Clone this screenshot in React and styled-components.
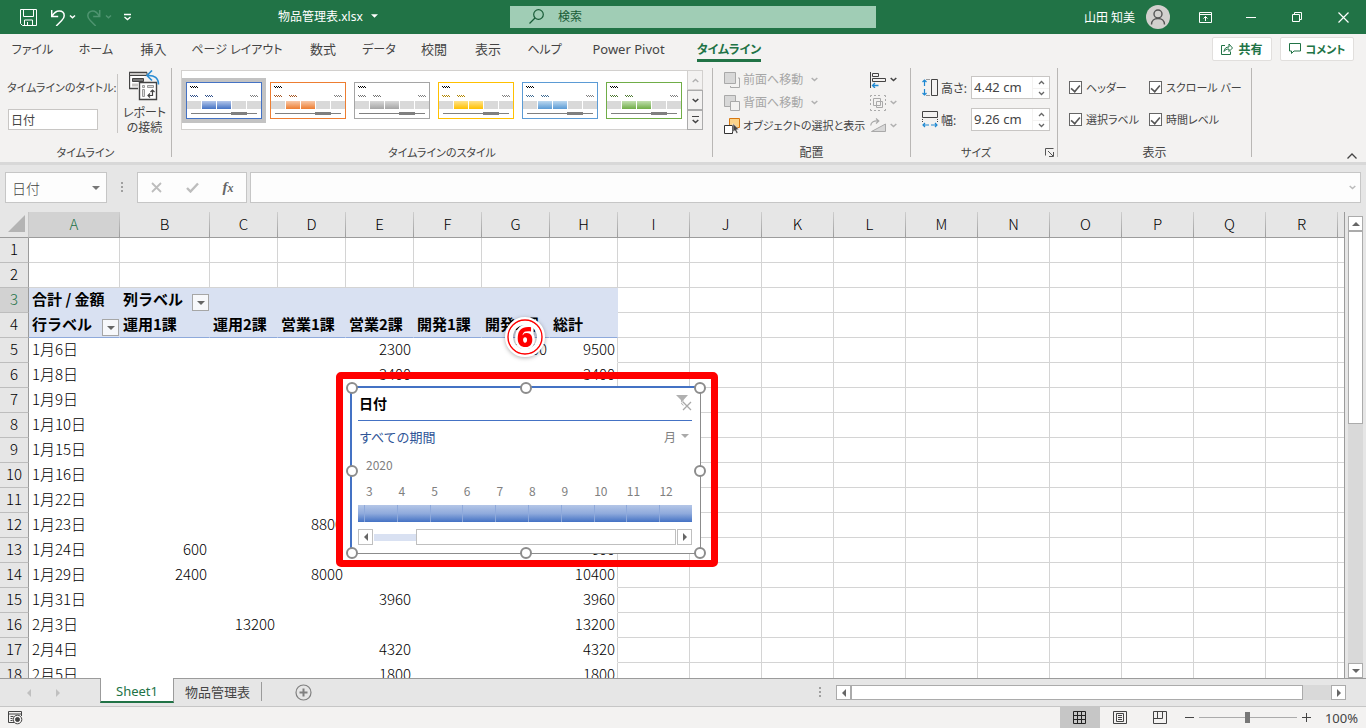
import styled, { createGlobalStyle } from "styled-components";

const columns = [
  { name: "A", width: 91, active: true },
  { name: "B", width: 90 },
  ...["C", "D", "E", "F", "G", "H"].map((name) => ({ name, width: 68 })),
  ...["I", "J", "K", "L", "M", "N", "O", "P", "Q", "R"].map((name) => ({
    name,
    width: 72,
  })),
];

const rows = [
  {},
  {},
  { A: "合計 / 金額", B: "列ラベル" },
  {
    A: "行ラベル",
    B: "運用1課",
    C: "運用2課",
    D: "営業1課",
    E: "営業2課",
    F: "開発1課",
    G: "開発2課",
    H: "総計",
  },
  { A: "1月6日", E: 2300, G: 7200, H: 9500 },
  { A: "1月8日", E: 3400, H: 3400 },
  { A: "1月9日" },
  { A: "1月10日" },
  { A: "1月15日" },
  { A: "1月16日" },
  { A: "1月22日" },
  { A: "1月23日", D: 8800 },
  { A: "1月24日", B: 600, H: 600 },
  { A: "1月29日", B: 2400, D: 8000, H: 10400 },
  { A: "1月31日", E: 3960, H: 3960 },
  { A: "2月3日", C: 13200, H: 13200 },
  { A: "2月4日", E: 4320, H: 4320 },
  { A: "2月5日", E: 1800, H: 1800 },
];

const tabs = [
  { name: "ファイル", width: 65, kana: true },
  { name: "ホーム", width: 62, kana: true },
  { name: "挿入", width: 53 },
  { name: "ページ レイアウト", width: 114, kana: true },
  { name: "数式", width: 58 },
  { name: "データ", width: 54, kana: true },
  { name: "校閲", width: 56 },
  { name: "表示", width: 52 },
  { name: "ヘルプ", width: 61, kana: true },
  { name: "Power Pivot", width: 107 },
  { name: "タイムライン", width: 94, kana: true, active: true },
];

const styles = [
  { color: "#4472c4", light: "#b4c6ea" },
  { color: "#ed7d31", light: "#f8c8a8" },
  { color: "#a5a5a5", light: "#d8d8d8" },
  { color: "#ffc000", light: "#ffe38c" },
  { color: "#5b9bd5", light: "#bcd8ef" },
  { color: "#70ad47", light: "#c2dfb0" },
];

const months = [3, 4, 5, 6, 7, 8, 9, 10, 11, 12];

const handles = [
  [0, 0],
  [50, 0],
  [100, 0],
  [0, 50],
  [100, 50],
  [0, 100],
  [50, 100],
  [100, 100],
];

function Chevron({ color = "#444" }) {
  return (
    <svg width="7" height="5" viewBox="0 0 7 5" fill="none" stroke={color}>
      <path d="M.7 1l2.8 2.6L6.3 1" strokeWidth="1.5" />
    </svg>
  );
}

function Triangle({ dir = "down", color = "#666" }) {
  const turn = { down: 0, left: 90, up: 180, right: 270 }[dir];
  return (
    <svg width="8" height="8" viewBox="0 0 8 8">
      <path
        d="M0 2h8L4 6z"
        fill={color}
        transform={`rotate(${turn} 4 4)`}
      />
    </svg>
  );
}

function StyleThumb({ color, light }) {
  const id = `grad${color.slice(1)}`;
  const wave = (x, y) => `M${x} ${y + 0.5}h8M${x + 1} ${y + 1.5}h7`;
  return (
    <svg width="76" height="37" viewBox="0 0 76 37" fill="none">
      <defs>
        <linearGradient id={id} x1="0" y1="0" x2="0" y2="1">
          <stop offset="0" stopColor={light} />
          <stop offset="1" stopColor={color} />
        </linearGradient>
      </defs>
      <rect x=".5" y=".5" width="75" height="36" fill="#fff" stroke={color} />
      <g strokeDasharray="1 1">
        <path d={wave(4, 4)} stroke="#000" />
        <path d={wave(4, 13) + wave(19, 13)} stroke={color} />
        <path d={wave(4, 13) + wave(19, 13)} stroke="#000" opacity=".3" />
        <path d={wave(64, 13)} stroke="#808080" />
      </g>
      <path d="M1 19h14v8H1zM46 19h14v8H46zM61 19h14v8H61z" fill="#d9d9d9" />
      <path d="M16 19h14v8H16zM31 19h14v8H31z" fill={`url(#${id})`} />
      <path d="M5 31.5h66" stroke="#7f7f7f" />
      <path d="M45 30h16v3H45z" fill="#7f7f7f" />
    </svg>
  );
}

function TitleBar() {
  return (
    <Title>
      <Quick>
        <IconButton aria-label="上書き保存" $w={37}>
          <svg width="17" height="17" viewBox="0 0 17 17" fill="none" stroke="#fff">
            <path d="M.5.5h16v16h-14l-2-2zM3.5.5v7h10v-7M4.5 16v-5h8v5M7.5 16v-3" />
          </svg>
        </IconButton>
        <IconButton aria-label="元に戻す" $w={28}>
          <svg width="26" height="17" viewBox="0 0 26 17" fill="none" stroke="#fff">
            <path d="M.7 1v6.500h6.500M1.200 7C3.200 3.500 5.700 2 8.200 2c3 0 5 2 5 4.800 0 2-1 3.300-2.500 4.700L5.200 17" strokeWidth="1.500" />
            <path d="M19 6.500l2.500 2.300L24 6.500" strokeWidth="1.500" />
          </svg>
        </IconButton>
        <IconButton aria-label="やり直し" $w={28}>
          <svg width="26" height="17" viewBox="0 0 26 17" fill="none" stroke="#4f9470">
            <path d="M12.700 1v6.500H6.200M12.200 7C10.200 3.500 7.700 2 5.700 2 2.700 2 .8 4 .8 6.800c0 2 1 3.300 2.500 4.700L8.700 17" strokeWidth="1.500" />
            <path d="M19 6.500l2.500 2.300L24 6.500" strokeWidth="1.500" />
          </svg>
        </IconButton>
        <IconButton aria-label="カスタマイズ" $w={12}>
          <svg width="9" height="8" viewBox="0 0 9 8" fill="none" stroke="#fff">
            <path d="M1 1.500h7M1.500 4l3 2.500L7.500 4" strokeWidth="1.400" />
          </svg>
        </IconButton>
      </Quick>
      <FileName>
        物品管理表.xlsx
        <Triangle color="#fff" />
      </FileName>
      <Search>
        <svg width="15" height="15" viewBox="0 0 15 15" fill="none" stroke="#185c37">
          <circle cx="9.500" cy="5.500" r="4.800" strokeWidth="1.200" />
          <path d="M6 9L.5 14.500" strokeWidth="1.300" />
        </svg>
        <input type="text" placeholder="検索" aria-label="検索" />
      </Search>
      <Account>
        山田 知美
        <svg width="24" height="24" viewBox="0 0 24 24" fill="none" stroke="#555">
          <circle cx="12" cy="12" r="12" fill="#d2d0ce" stroke="none" />
          <circle cx="12" cy="9" r="4" strokeWidth="1.400" />
          <path d="M5.500 19.500c0-3.800 2.800-6 6.500-6s6.500 2.200 6.500 6" strokeWidth="1.400" />
        </svg>
      </Account>
      <WindowButtons>
        <IconButton aria-label="リボンの表示オプション" $w={46}>
          <svg width="13" height="11" viewBox="0 0 13 11" fill="none" stroke="#fff">
            <path d="M.5.500h12v10H.5zM.500 2.500h12M6.500 9V4.500M4.500 6.500l2-2 2 2" />
          </svg>
        </IconButton>
        <IconButton aria-label="最小化" $w={46}>
          <svg width="10" height="1"><path d="M0 .5h10" stroke="#fff" /></svg>
        </IconButton>
        <IconButton aria-label="元に戻す (縮小)" $w={46}>
          <svg width="10" height="10" viewBox="0 0 10 10" fill="none" stroke="#fff">
            <path d="M.5 2.500h7v7h-7zM2.500 2.500v-2h7v7h-2" />
          </svg>
        </IconButton>
        <IconButton aria-label="閉じる" $w={46}>
          <svg width="11" height="11" viewBox="0 0 11 11" stroke="#fff">
            <path d="M.5.500l10 10M10.500.500l-10 10" strokeWidth="1.200" />
          </svg>
        </IconButton>
      </WindowButtons>
    </Title>
  );
}

function RibbonTabs() {
  return (
    <TabBar>
      {tabs.map((tab) => (
        <Tab key={tab.name} $w={tab.width} $kana={tab.kana} $active={tab.active}>
          <span>{tab.name}</span>
        </Tab>
      ))}
      <TabActions>
        <ActionButton $w={60}>
          <svg width="12" height="12" viewBox="0 0 12 12" fill="none" stroke="#217346">
            <path d="M4 2.500H.5v9h9V8.500M3 8.500c.300-3 2-4.500 5-4.500V1l3.500 4L8 8.500V6C5.500 6 4 6.800 3 8.500z" />
          </svg>
          共有
        </ActionButton>
        <ActionButton $w={74} $kana>
          <svg width="12" height="12" viewBox="0 0 12 12" fill="none" stroke="#217346">
            <path d="M.5.500h11v7.500H5L2.500 10.500V8h-2z" />
          </svg>
          コメント
        </ActionButton>
      </TabActions>
    </TabBar>
  );
}

function Ribbon() {
  return (
    <RibbonBar>
      <Group $w={172}>
        <GroupBody>
          <TitleField>
            <label htmlFor="caption">タイムラインのタイトル:</label>
            <input id="caption" type="text" defaultValue="日付" />
          </TitleField>
          <ReportButton>
            <svg width="31" height="31" viewBox="0 0 31 31" fill="none" stroke="#444">
              <path d="M18 2.500H.500v16H9" fill="#fff" strokeWidth="1.300" />
              <path d="M.500 2.500H18v3H.500z" fill="#c8c6c4" />
              <path d="M3.500 8.500h11v3h-11z" fill="#777" />
              <path d="M3 13.500h6v3H3z" fill="#c8c6c4" stroke="none" />
              <path d="M10.500 12.500h17v17h-17z" fill="#fff" strokeWidth="1.400" />
              <path d="M13.500 15.500h2v2h-2zM13.500 19.500h2v7h-2zM18.500 15.500h6v2h-6z" stroke="#999" fill="#ddd" />
              <path d="M19 25.500h4.500V20M21 23.500l-2 2 2 2M21.500 22l2-2 2 2" strokeWidth="1.200" />
              <path d="M23 .5l-5 5 5 5M18.500 5.500c7-.5 11 2.500 11 9" stroke="#2a8dd4" strokeWidth="1.600" />
            </svg>
            <span>レポート</span>
            <span>の接続</span>
          </ReportButton>
        </GroupBody>
        <GroupLabel $kana>タイムライン</GroupLabel>
      </Group>

      <Group $w={541}>
        <Gallery>
          {styles.map((style, i) => (
            <StyleButton key={style.color} $selected={i === 0} aria-label={`スタイル ${i + 1}`}>
              <StyleThumb {...style} />
            </StyleButton>
          ))}
          <GalleryScroll>
            <button aria-label="前の行" disabled>
              <svg width="7" height="5" fill="none" stroke="#b0b0b0">
                <path d="M.7 4l2.800-2.600L6.300 4" strokeWidth="1.300" />
              </svg>
            </button>
            <button aria-label="次の行">
              <Chevron />
            </button>
            <button aria-label="その他">
              <svg width="7" height="8" fill="none" stroke="#444">
                <path d="M0 .5h7" />
                <path d="M.7 4l2.800 2.600L6.300 4" strokeWidth="1.500" />
              </svg>
            </button>
          </GalleryScroll>
        </Gallery>
        <GroupLabel $kana>タイムラインのスタイル</GroupLabel>
      </Group>

      <Group $w={198}>
        <ArrangeBody>
          <ArrangeList>
            <ToolButton disabled>
              <svg width="16" height="16" viewBox="0 0 16 16" fill="none" stroke="#a9a9a9">
                <path d="M.5.500h11v11H.500z" fill="#d8d8d8" />
                <path d="M14 6h1.500v9.500H6.500V14" />
              </svg>
              <ToolText $w={65}>前面へ移動</ToolText>
              <Chevron color="#b0b0b0" />
            </ToolButton>
            <ToolButton disabled>
              <svg width="16" height="16" viewBox="0 0 16 16" stroke="#a9a9a9">
                <path d="M.5.500h11v11H.500z" fill="#d8d8d8" />
                <path d="M6.500 6.500h9v9h-9z" fill="#f3f2f1" />
              </svg>
              <ToolText $w={65}>背面へ移動</ToolText>
              <Chevron color="#b0b0b0" />
            </ToolButton>
            <ToolButton>
              <svg width="16" height="16" viewBox="0 0 16 16">
                <path d="M5.500.500h10v9h-10z" fill="#fbd48b" stroke="#d8770f" />
                <path d="M.5 7.500h8v8h-8z" fill="#fff" stroke="#333" />
                <path d="M9 5.500l6 6-2.500.300 1.500 3-1.500.700-1.500-3-2 1.500z" fill="#444" stroke="#fff" strokeWidth=".5" />
              </svg>
              <ToolText $kana>オブジェクトの選択と表示</ToolText>
            </ToolButton>
          </ArrangeList>
          <ArrangeIcons>
            <ToolButton aria-label="配置">
              <svg width="16" height="16" viewBox="0 0 16 16" fill="none" stroke="#444">
                <path d="M.5 0v16M2.500 1.500h6v3h-6zM2.500 6.500h13v3h-13z" />
                <path d="M8.500 13.500h-6M5 11l-2.500 2.500L5 16" stroke="#1e88d2" strokeWidth="1.300" />
              </svg>
              <Chevron />
            </ToolButton>
            <ToolButton aria-label="グループ化" disabled>
              <svg width="16" height="16" viewBox="0 0 16 16" fill="none" stroke="#a9a9a9">
                <path d="M.5 2V.500H2M14 .500h1.500V2M15.500 14v1.500H14M2 15.500H.500V14" />
                <path d="M4 .500h8M4 15.500h8M.500 4v8M15.500 4v8" strokeDasharray="2 2" />
                <path d="M3.500 3.500h7v7h-7zM6.500 6.500h6v6h-6z" />
              </svg>
              <Chevron color="#b0b0b0" />
            </ToolButton>
            <ToolButton aria-label="回転" disabled>
              <svg width="16" height="16" viewBox="0 0 16 16" fill="none" stroke="#a9a9a9">
                <path d="M15.500 6v7.500h-14z" fill="#d8d8d8" />
                <path d="M.7 7.500C1 4 4 2.500 8.500 3M6 .5L8.800 3 6 5.500" strokeWidth="1.200" />
              </svg>
              <Chevron color="#b0b0b0" />
            </ToolButton>
          </ArrangeIcons>
        </ArrangeBody>
        <GroupLabel>配置</GroupLabel>
      </Group>

      <Group $w={147}>
        <SizeBody>
          <SizeRow>
            <svg width="16" height="17" viewBox="0 0 16 17" fill="none">
              <path d="M9.500.500h6v16h-6z" stroke="#444" />
              <path d="M4.500.500h4M4.500 16.500h4" stroke="#444" strokeDasharray="1 1" />
              <path d="M2.500 1v6M.500 3l2-2 2 2M2.500 10v6M.500 14l2 2 2-2" stroke="#1e88d2" strokeWidth="1.200" />
            </svg>
            <label htmlFor="height">高さ:</label>
            <Spinner id="height" value="4.42 cm" />
          </SizeRow>
          <SizeRow>
            <svg width="16" height="17" viewBox="0 0 16 17" fill="none">
              <path d="M.5.500h15v6H.500z" stroke="#444" />
              <path d="M.500 8v4M15.500 8v4" stroke="#444" strokeDasharray="1 1" />
              <path d="M1 14h6M3 12l-2 2 2 2M9 14h6M13 12l2 2-2 2" stroke="#1e88d2" strokeWidth="1.200" />
            </svg>
            <label htmlFor="width">幅:</label>
            <Spinner id="width" value="9.26 cm" />
          </SizeRow>
        </SizeBody>
        <GroupLabel $kana>
          サイズ
          <button aria-label="サイズとプロパティ">
            <svg width="9" height="9" viewBox="0 0 9 9" fill="none" stroke="#555">
              <path d="M8.500.500h-8v7M3 3l5 5M8.500 4v4.500H4" />
            </svg>
          </button>
        </GroupLabel>
      </Group>

      <Group $w={194}>
        <CheckGrid>
          {["ヘッダー", "スクロール バー", "選択ラベル", "時間レベル"].map((text) => (
            <Check key={text}>
              <input type="checkbox" defaultChecked />
              {text}
            </Check>
          ))}
        </CheckGrid>
        <GroupLabel>表示</GroupLabel>
      </Group>
      <Collapse aria-label="リボンを折りたたむ">
        <svg width="10" height="6" fill="none" stroke="#444">
          <path d="M.5 5.500L5 1l4.500 4.500" strokeWidth="1.300" />
        </svg>
      </Collapse>
    </RibbonBar>
  );
}

function Spinner({ id, value }) {
  return (
    <SpinBox>
      <input id={id} type="text" defaultValue={value} />
      <div>
        <button aria-label="増やす">
          <svg width="7" height="5" fill="none" stroke="#666">
            <path d="M1 4l2.500-2.500L6 4" strokeWidth="1.300" />
          </svg>
        </button>
        <button aria-label="減らす">
          <svg width="7" height="5" fill="none" stroke="#666">
            <path d="M1 1l2.500 2.500L6 1" strokeWidth="1.300" />
          </svg>
        </button>
      </div>
    </SpinBox>
  );
}

function Dots() {
  return (
    <svg width="3" height="13" fill="#a0a0a0">
      <path d="M0 1h2v2H0zM0 5h2v2H0zM0 9h2v2H0z" />
    </svg>
  );
}

function FormulaBar() {
  return (
    <Formula>
      <NameBox>
        <input type="text" defaultValue="日付" aria-label="名前ボックス" />
        <button aria-label="名前の一覧">
          <Triangle color="#777" />
        </button>
      </NameBox>
      <Dots />
      <FormulaButtons>
        <button aria-label="キャンセル">
          <svg width="11" height="11" viewBox="0 0 11 11" stroke="#bdbdbd">
            <path d="M1 1l9 9M10 1l-9 9" strokeWidth="1.800" />
          </svg>
        </button>
        <button aria-label="入力">
          <svg width="13" height="11" viewBox="0 0 13 11" fill="none" stroke="#bdbdbd">
            <path d="M1 6l3.500 3.500L12 1.500" strokeWidth="2.400" />
          </svg>
        </button>
        <button aria-label="関数の挿入">
          <Fx>
            f<small>x</small>
          </Fx>
        </button>
      </FormulaButtons>
      <FormulaInput>
        <input type="text" aria-label="数式バー" />
        <Chevron color="#bbb" />
      </FormulaInput>
    </Formula>
  );
}

function Sheet() {
  return (
    <Table>
      <colgroup>
        <col width="29" />
        {columns.map((col) => (
          <col key={col.name} width={col.width} />
        ))}
        <col />
      </colgroup>
      <thead>
        <tr>
          <Corner>
            <svg width="17" height="17">
              <path d="M17 0v17H0z" fill="#b4b4b4" />
            </svg>
          </Corner>
          {columns.map((col) => (
            <ColumnHead key={col.name} $active={col.active}>
              {col.name}
            </ColumnHead>
          ))}
          <ColumnHead $last />
        </tr>
      </thead>
      <tbody>
        {rows.map((row, i) => (
          <tr key={i}>
            <RowHead $active={i === 2}>{i + 1}</RowHead>
            {columns.map((col, c) => (
              <Cell
                key={col.name}
                $kind={c > 7 || i < 2 ? "plain" : i < 4 ? "head" : "pivot"}
                $end={c === 7}
                $rule={i === 3}
                $numeric={typeof row[col.name] === "number"}
              >
                {(i === 2 && c === 1) || (i === 3 && c === 0) ? (
                  <FilterCell>
                    {row[col.name]}
                    <button aria-label="フィルター">
                      <Triangle />
                    </button>
                  </FilterCell>
                ) : (
                  row[col.name]
                )}
              </Cell>
            ))}
            <Cell $kind="plain" $last />
          </tr>
        ))}
      </tbody>
    </Table>
  );
}

function TimelineSlicer() {
  return (
    <Callout>
      <Slicer>
        <SlicerHead>
          日付
          <button aria-label="フィルターのクリア">
            <svg width="16" height="17" viewBox="0 0 16 17" fill="none">
              <path d="M0 1h12L7.500 6v6L5 9.500V6z" fill="#b0b0b0" />
              <path d="M6 7.500l9 8M15 7.500l-8 8" stroke="#fff" strokeWidth="3" />
              <path d="M6.500 7.500l8.500 8.500M15 8l-8 8" stroke="#a8a8a8" strokeWidth="1.300" />
            </svg>
          </button>
        </SlicerHead>
        <Period>
          すべての期間
          <Level>
            <select aria-label="時間レベル" defaultValue="月">
              <option>月</option>
            </select>
            <Triangle color="#aaa" />
          </Level>
        </Period>
        <Year>2020</Year>
        <Months>
          {months.map((month) => (
            <span key={month}>{month}</span>
          ))}
        </Months>
        <Bar>
          {months.map((month) => (
            <span key={month} />
          ))}
        </Bar>
        <SlicerScroll>
          <button aria-label="前へ">
            <Triangle dir="left" />
          </button>
          <SlicerTrack />
          <SlicerThumb />
          <button aria-label="次へ">
            <Triangle dir="right" />
          </button>
        </SlicerScroll>
        {handles.map(([x, y]) => (
          <Handle key={`${x}-${y}`} $x={x} $y={y} />
        ))}
      </Slicer>
    </Callout>
  );
}

function Badge() {
  return (
    <BadgeSvg width="48" height="48" viewBox="0 0 48 48">
      <circle cx="24" cy="24" r="17" fill="none" stroke="#fff" strokeWidth="6" />
      <circle cx="24" cy="24" r="17" fill="none" stroke="#f00" strokeWidth="1.400" />
      <circle cx="24" cy="24" r="14" fill="none" stroke="#fff" strokeWidth="4" />
      <text x="24" y="34" textAnchor="middle">
        6
      </text>
    </BadgeSvg>
  );
}

function BottomBar() {
  return (
    <>
      <SheetTabs>
        <SheetNav>
          <button aria-label="前のシート">
            <Triangle dir="left" color="#c0c0c0" />
          </button>
          <button aria-label="次のシート">
            <Triangle dir="right" color="#c0c0c0" />
          </button>
        </SheetNav>
        <SheetTab $active>Sheet1</SheetTab>
        <SheetTab>物品管理表</SheetTab>
        <AddSheet aria-label="新しいシート">
          <svg width="17" height="17" viewBox="0 0 17 17" fill="none" stroke="#808080">
            <circle cx="8.500" cy="8.500" r="7.500" strokeWidth="1.200" />
            <path d="M8.500 4.500v8M4.500 8.500h8" strokeWidth="2" />
          </svg>
        </AddSheet>
        <Dots />
        <HScroll>
          <ScrollButton aria-label="左へ">
            <Triangle dir="left" />
          </ScrollButton>
          <HThumb />
          <ScrollButton aria-label="右へ">
            <Triangle dir="right" />
          </ScrollButton>
        </HScroll>
      </SheetTabs>
      <StatusBar>
        <MacroButton aria-label="マクロの記録">
          <svg width="15" height="14" viewBox="0 0 15 14" fill="none" stroke="#444">
            <path d="M6 11.500H.500V.500h13V5M.500 3h13M2.500 5.500h3M2.500 7.500h2M2.500 9.500h2" />
            <circle cx="9.500" cy="8.500" r="4.300" fill="#f3f2f1" />
            <circle cx="9.500" cy="8.500" r="2" fill="#444" />
          </svg>
        </MacroButton>
        <ViewButton aria-label="標準" $active>
          <svg width="13" height="13" fill="none" stroke="#222">
            <path d="M.5.500h12v12H.500zM4.500 0v13M8.500 0v13M0 4.500h13M0 8.500h13" />
          </svg>
        </ViewButton>
        <ViewButton aria-label="ページ レイアウト">
          <svg width="14" height="13" fill="none" stroke="#444">
            <path d="M.5.500h13v12H.500zM3.500 2.500h7v8h-7zM5 4.500h4M5 6.500h4M5 8.500h4" />
          </svg>
        </ViewButton>
        <ViewButton aria-label="改ページ プレビュー">
          <svg width="14" height="13" fill="none" stroke="#444">
            <path d="M.5.500h13v12H.500zM4.500 .500v7M9.500.500v7M.500 7.500h9" />
          </svg>
        </ViewButton>
        <Zoom>
          <button aria-label="縮小">
            <svg width="9" height="9" stroke="#444"><path d="M0 4.500h9" /></svg>
          </button>
          <input type="range" min="0" max="200" defaultValue="100" aria-label="ズーム" />
          <button aria-label="拡大">
            <svg width="9" height="9" stroke="#444"><path d="M0 4.500h9M4.500 0v9" /></svg>
          </button>
          <span>100%</span>
        </Zoom>
      </StatusBar>
    </>
  );
}

export default function App() {
  return (
    <Window>
      <Global />
      <TitleBar />
      <RibbonTabs />
      <Ribbon />
      <FormulaBar />
      <Workspace>
        <GridArea>
          <Sheet />
          <TimelineSlicer />
          <Badge />
        </GridArea>
        <VScroll>
          <ScrollButton aria-label="上へ">
            <Triangle dir="up" />
          </ScrollButton>
          <VThumb />
          <ScrollButton aria-label="下へ">
            <Triangle />
          </ScrollButton>
        </VScroll>
      </Workspace>
      <BottomBar />
    </Window>
  );
}

const Global = createGlobalStyle`
  * {
    box-sizing: border-box;
  }
  body {
    margin: 0;
    overflow: hidden;
  }
  button, input, select {
    font: inherit;
    color: inherit;
    font-feature-settings: inherit;
    margin: 0;
    padding: 0;
    border: 0;
    border-radius: 0;
    outline: 0;
    background: none;
    appearance: none;
    min-width: 0;
  }
  svg {
    display: block;
    flex: none;
  }
`;

const Window = styled.div`
  display: flex;
  flex-direction: column;
  height: 100vh;
  background-color: #e6e6e6;
  color: #444444;
  font-family: "Noto Sans", "Noto Sans CJK JP", sans-serif;
  font-size: 12px;
  font-feature-settings: "palt";
  white-space: nowrap;
`;

const Title = styled.header`
  display: flex;
  align-items: center;
  flex: none;
  height: 34px;
  background-color: #217346;
  color: #ffffff;
`;

const Quick = styled.div`
  display: flex;
  gap: 8px;
  width: 278px;
  padding-left: 10px;

  button:nth-child(n + 2) {
    justify-content: flex-start;
    margin-left: -4px;
    margin-right: 4px;
  }
`;

const IconButton = styled.button`
  display: flex;
  align-items: center;
  justify-content: center;
  width: ${(props) => props.$w}px;
  height: 34px;
`;

const FileName = styled.div`
  display: flex;
  align-items: center;
  gap: 8px;
  width: 232px;
  padding-bottom: 2px;

  svg {
    width: 7px;
  }
`;

const Search = styled.div`
  display: flex;
  align-items: center;
  gap: 14px;
  width: 366px;
  height: 22px;
  padding: 0 0 1px 19px;
  background-color: #a0cdb5;
  color: #185c37;

  input {
    flex: 1;
  }
  input::placeholder {
    color: #185c37;
    opacity: 1;
  }
`;

const Account = styled.div`
  display: flex;
  flex: 1;
  align-items: center;
  justify-content: flex-end;
  gap: 11px;
`;

const WindowButtons = styled.div`
  display: flex;
  margin-left: 12px;
`;

const TabBar = styled.nav`
  display: flex;
  flex: none;
  height: 34px;
  background-color: #f3f2f1;
`;

const Tab = styled.button`
  display: flex;
  justify-content: center;
  width: ${(props) => props.$w}px;
  font-size: ${(props) => (props.$kana ? "12px" : "13px")};
  font-weight: ${(props) => (props.$active ? "bold" : "normal")};
  color: ${(props) => (props.$active ? "#217346" : "#444444")};

  span {
    height: 28px;
    line-height: ${(props) => (props.$kana ? "32px" : "30px")};
    border-bottom: 3px solid
      ${(props) => (props.$active ? "#217346" : "transparent")};
  }
`;

const TabActions = styled.div`
  display: flex;
  flex: 1;
  justify-content: flex-end;
  gap: 8px;
  padding: 3px 12px 0 0;
`;

const ActionButton = styled.button`
  display: flex;
  align-items: center;
  justify-content: center;
  gap: 5px;
  width: ${(props) => props.$w}px;
  height: 24px;
  background-color: #ffffff;
  border: 1px solid #e1dfdd;
  border-radius: 2px;
  color: #217346;
  font-size: ${(props) => (props.$kana ? "11px" : "12px")};
  font-weight: bold;
`;

const RibbonBar = styled.section`
  display: flex;
  flex: none;
  height: 97px;
  background-color: #f3f2f1;
  border-bottom: 3px solid #d8d8d8;
`;

const Group = styled.div`
  display: flex;
  flex-direction: column;
  flex: none;
  width: ${(props) => props.$w}px;
  height: 89px;
  border-right: 1px solid #b9b7b5;
`;

const GroupBody = styled.div`
  display: flex;
  flex: 1;
`;

const GroupLabel = styled.div`
  display: flex;
  align-items: center;
  justify-content: center;
  height: 20px;
  padding-top: 10px;
  font-size: ${(props) => (props.$kana ? "11px" : "12px")};

  button {
    margin: 0 -50px 0 51px;
    padding: 3px;
  }
`;

const TitleField = styled.div`
  display: flex;
  flex-direction: column;
  width: 118px;
  margin: 6px 0 4px;
  padding: 4px 0 0 7px;
  border-right: 1px solid #c8c6c4;

  label {
    height: 31px;
    font-size: 11px;
    line-height: 20px;
  }
  input {
    width: 90px;
    height: 21px;
    margin-left: 1px;
    padding-left: 2px;
    background-color: #ffffff;
    border: 1px solid #c8c6c4;
  }
`;

const ReportButton = styled.button`
  display: flex;
  flex: 1;
  flex-direction: column;
  align-items: center;
  padding-top: 2px;
  line-height: 15px;

  svg {
    margin-bottom: 4px;
  }
`;

const Gallery = styled.div`
  display: flex;
  align-items: center;
  align-self: center;
  height: 60px;
  margin: 2px 0 7px;
  background-color: #ffffff;
  border: 1px solid #d2d0ce;
  border-right: 0;
`;

const StyleButton = styled.button`
  padding: 4px;
  background-color: ${(props) => (props.$selected ? "#c3c3c3" : "transparent")};
`;

const GalleryScroll = styled.div`
  display: grid;
  grid-template-rows: 20px 20px 20px;
  align-self: flex-start;
  width: 16px;
  margin: -1px 0 -1px 1px;

  button {
    display: grid;
    place-items: center;
    background-color: #f3f2f1;
    border: 1px solid #ababab;
  }
  button:disabled {
    border-color: #d2d0ce;
  }
`;

const ArrangeBody = styled.div`
  display: flex;
  flex: 1;
  gap: 10px;
  padding-left: 11px;
`;

const ArrangeList = styled.div`
  display: flex;
  flex-direction: column;
  width: 136px;
`;

const ArrangeIcons = styled.div`
  display: flex;
  flex-direction: column;

  button {
    gap: 4px;
  }
`;

const ToolButton = styled.button`
  display: flex;
  align-items: center;
  gap: 3px;
  height: 23px;
  line-height: 18px;

  &:disabled {
    color: #a6a6a6;
  }
`;

const ToolText = styled.span`
  width: ${(props) => (props.$w ? `${props.$w}px` : "auto")};
  font-size: ${(props) => (props.$kana ? "11px" : "12px")};
  text-align: left;
`;

const SizeBody = styled.div`
  display: flex;
  flex: 1;
  flex-direction: column;
  gap: 9px;
  padding: 8px 7px 0 11px;
`;

const SizeRow = styled.div`
  display: flex;
  align-items: center;
  height: 23px;
  gap: 3px;

  label {
    flex: 1;
  }
`;

const SpinBox = styled.div`
  display: flex;
  width: 79px;
  height: 23px;
  background-color: #ffffff;
  border: 1px solid #c8c6c4;

  input {
    flex: 1;
    padding: 0 0 2px 2px;
    font-size: 13px;
  }
  div {
    display: grid;
    grid-template-rows: 1fr 1fr;
    width: 17px;
    border-left: 1px solid #f3f2f1;
  }
  button {
    display: grid;
    place-items: center;
  }
  button + button {
    border-top: 1px solid #f3f2f1;
  }
`;

const CheckGrid = styled.div`
  display: grid;
  grid-template-columns: 80px 1fr;
  grid-template-rows: 32px 32px;
  flex: 1;
  padding: 3px 0 0 11px;
`;

const Check = styled.label`
  display: flex;
  align-items: center;
  gap: 4px;
  font-size: 11px;

  input {
    display: flex;
    justify-content: center;
    width: 13px;
    height: 13px;
    background-color: #ffffff;
    border: 1px solid #666666;
  }
  input:checked::after {
    content: "";
    width: 5px;
    height: 9px;
    border: solid #555555;
    border-width: 0 2px 2px 0;
    transform: rotate(40deg) scale(0.8);
  }
`;

const Collapse = styled.button`
  margin-left: auto;
  align-self: flex-end;
  padding: 4px 9px 3px;
`;

const Formula = styled.div`
  display: flex;
  flex: none;
  align-items: center;
  height: 47px;
  padding: 7px 5px 9px;

  > svg {
    margin: 0 13px 0 14px;
  }
`;

const NameBox = styled.div`
  display: flex;
  align-items: center;
  width: 102px;
  height: 31px;
  padding: 0 6px;
  background-color: #fdfdfd;
  border: 1px solid #c6c6c6;
  font-size: 14px;
  font-weight: 300;

  input {
    flex: 1;
  }
`;

const FormulaButtons = styled.div`
  display: flex;
  width: 110px;
  height: 31px;
  margin-right: 3px;
  background-color: #fdfdfd;
  border: 1px solid #c6c6c6;

  button {
    display: grid;
    flex: 1;
    place-items: center;
  }
`;

const Fx = styled.span`
  color: #666666;
  font-family: "Liberation Serif", serif;
  font-size: 15px;
  font-style: italic;
  font-weight: bold;

  small {
    font-size: 12px;
  }
`;

const FormulaInput = styled.div`
  display: flex;
  flex: 1;
  align-items: center;
  height: 31px;
  padding-right: 4px;
  background-color: #fdfdfd;
  border: 1px solid #c6c6c6;

  input {
    flex: 1;
  }
`;

const Workspace = styled.main`
  display: flex;
  flex: 1;
  min-height: 0;
`;

const GridArea = styled.div`
  position: relative;
  flex: 1;
  overflow: hidden;
  border-right: 1px solid #9b9b9b;
`;

const Table = styled.table`
  width: 100%;
  table-layout: fixed;
  border-collapse: separate;
  border-spacing: 0;
  color: #000000;
  font-family: "Noto Sans CJK JP", sans-serif;
  font-size: 15px;
  font-feature-settings: normal;
  line-height: 22px;

  th,
  td {
    padding: 0 0 2px;
    overflow: hidden;
    font-weight: 300;
  }
`;

const Corner = styled.th`
  height: 26px;
  border-right: 1px solid #c6c6c6;
  border-bottom: 1px solid #9b9b9b;

  svg {
    margin-left: 8px;
  }
`;

const ColumnHead = styled.th`
  background-color: ${(props) => (props.$active ? "#d2d2d2" : "#e6e6e6")};
  border-right: ${(props) => (props.$last ? 0 : "1px solid")};
  border-image: linear-gradient(#d0d0d0, #9b9b9b) 1;
  border-bottom: 1px solid #9b9b9b;
  color: ${(props) => (props.$active ? "#217346" : "#000000")};
`;

const RowHead = styled.th`
  height: 25px;
  background-color: ${(props) => (props.$active ? "#d2d2d2" : "#e6e6e6")};
  border-right: 1px solid #9b9b9b;
  border-bottom: 1px solid #bdbdbd;
  color: ${(props) => (props.$active ? "#217346" : "#000000")};
`;

const lineColor = {
  plain: "#d4d4d4",
  head: "#d9e1f2",
  pivot: "#ffffff",
};

const Cell = styled.td`
  height: 25px;
  && {
    padding: 0 2px 2px 3px;
    font-weight: ${(props) => (props.$kind === "head" ? "bold" : "300")};
  }
  background-color: ${(props) =>
    props.$kind === "head" ? "#d9e1f2" : "#ffffff"};
  border-right: ${(props) => (props.$last ? 0 : "1px solid")};
  border-right-color: ${(props) =>
    props.$end && props.$kind === "pivot" ? "#d4d4d4" : lineColor[props.$kind]};
  border-bottom: 1px solid
    ${(props) =>
      props.$rule && props.$kind === "head"
        ? "#8ea9db"
        : lineColor[props.$kind]};
  text-align: ${(props) => (props.$numeric ? "right" : "left")};
`;

const FilterCell = styled.div`
  display: flex;
  justify-content: space-between;
  height: 22px;
  margin-right: -2px;

  button {
    display: grid;
    place-items: center;
    align-self: flex-end;
    width: 17px;
    height: 17px;
    margin-bottom: -1px;
    background-color: #f7f8fb;
    border: 1px solid #a6a6a6;
  }
`;

// floats over the cells
const Callout = styled.div`
  position: absolute;
  top: 160px;
  left: 336px;
  width: 382px;
  height: 195px;
  padding: 7px 10px 6px 7px;
  background-color: #ffffff;
  background-clip: content-box;
  border: 7px solid #ff0000;
  border-radius: 5px;
`;

const Slicer = styled.div`
  position: relative;
  height: 168px;
  padding: 0 8px 0 6px;
  background-color: #ffffff;
  border: 1px solid #8c8c8c;
  border-top: 2px solid #4472c4;
  border-left: 2px solid #4472c4;
  color: #808080;
  font-family: "Noto Sans CJK JP", sans-serif;
  font-feature-settings: normal;

  button {
    display: grid;
    place-items: center;
  }
`;

const SlicerHead = styled.div`
  display: flex;
  align-items: center;
  justify-content: space-between;
  height: 33px;
  padding: 0 0 3px 1px;
  border-bottom: 1px solid #4472c4;
  color: #000000;
  font-size: 14px;
  font-weight: bold;
`;

const Period = styled.div`
  display: flex;
  align-items: center;
  justify-content: space-between;
  height: 32px;
  padding: 0 0 2px 1px;
  color: #2f5597;
  font-size: 13px;
`;

const Level = styled.div`
  display: flex;
  align-items: center;
  gap: 4px;
  padding-right: 3px;
  color: #808080;
  font-size: 12px;
`;

const Year = styled.div`
  height: 26px;
  padding-left: 8px;
  line-height: 24px;
`;

const Months = styled.div`
  display: grid;
  grid-template-columns: repeat(10, 1fr);
  height: 26px;
  padding-left: 8px;
  line-height: 24px;
`;

const Bar = styled.div`
  display: grid;
  grid-template-columns: repeat(10, 1fr);
  height: 17px;
  padding-left: 6px;
  background: linear-gradient(#b4c6e7, #8faadc 50%, #4472c4);

  span {
    border-left: 1px solid #8ea9db;
  }
`;

const SlicerScroll = styled.div`
  display: flex;
  align-items: center;
  margin-top: 7px;

  button {
    width: 15px;
    height: 16px;
    border: 1px solid #bfbfbf;
  }
`;

const SlicerTrack = styled.div`
  width: 42px;
  height: 7px;
  margin-left: 1px;
  background-color: #d9e1f2;
`;

const SlicerThumb = styled.div`
  flex: 1;
  height: 16px;
  margin-right: 1px;
  border: 1px solid #bfbfbf;
`;

const Handle = styled.span`
  position: absolute;
  top: ${(props) => props.$y}%;
  left: ${(props) => props.$x}%;
  width: 12px;
  height: 12px;
  margin: -6px;
  background-color: #ffffff;
  border: 2px solid #8c8c8c;
  border-radius: 50%;
`;

const BadgeSvg = styled.svg`
  position: absolute;
  top: 101px;
  left: 501px;
  filter: drop-shadow(0 1px 2px rgba(0, 0, 0, 0.3));

  text {
    fill: #ff0000;
    stroke: #ffffff;
    stroke-width: 5px;
    paint-order: stroke;
    font-family: "Noto Sans", sans-serif;
    font-size: 28px;
    font-weight: 900;
  }
`;

const VScroll = styled.div`
  display: flex;
  flex-direction: column;
  width: 15px;
  margin: 4px 3px 0 3px;
  background-color: #d9d9d9;
`;

const ScrollButton = styled.button`
  display: grid;
  place-items: center;
  flex: none;
  width: 15px;
  height: 15px;
  background-color: #ffffff;
  border: 1px solid #ababab;
`;

const VThumb = styled.div`
  height: 193px;
  margin-bottom: auto;
  background-color: #ffffff;
  border: 1px solid #ababab;
`;

const SheetTabs = styled.div`
  display: flex;
  flex: none;
  align-items: center;
  height: 28px;
  border-top: 1px solid #9b9b9b;
  font-size: 13px;
`;

const SheetNav = styled.div`
  display: flex;
  align-items: center;
  gap: 21px;
  width: 100px;
  padding-left: 25px;
`;

const SheetTab = styled.button`
  align-self: flex-start;
  width: ${(props) => (props.$active ? "74px" : "88px")};
  height: ${(props) => (props.$active ? "25px" : "19px")};
  margin-top: ${(props) => (props.$active ? "-1px" : "3px")};
  padding-top: ${(props) => (props.$active ? "2px" : "0")};
  background-color: ${(props) => (props.$active ? "#ffffff" : "transparent")};
  border: solid #9b9b9b;
  border-width: ${(props) => (props.$active ? "0 1px" : "0 1px 0 0")};
  border-bottom: ${(props) => (props.$active ? "2px solid #217346" : "0")};
  color: ${(props) => (props.$active ? "#217346" : "#444444")};
`;

const AddSheet = styled.button`
  margin: 0 auto 0 33px;
`;

const HScroll = styled.div`
  display: flex;
  width: 510px;
  margin: 0 20px 0 14px;
  background-color: #d9d9d9;
`;

const HThumb = styled.div`
  width: 452px;
  margin-right: auto;
  background-color: #ffffff;
  border: 1px solid #ababab;
`;

const StatusBar = styled.footer`
  display: flex;
  flex: none;
  height: 22px;
  background-color: #f3f2f1;
  border-top: 1px solid #c6c6c6;
`;

const MacroButton = styled.button`
  margin-right: auto;
  padding-left: 8px;
`;

const ViewButton = styled.button`
  display: grid;
  place-items: center;
  width: 40px;
  background-color: ${(props) => (props.$active ? "#c6c6c6" : "transparent")};
`;

const Zoom = styled.div`
  display: flex;
  align-items: center;
  gap: 5px;
  padding: 0 8px 0 5px;

  input {
    width: 98px;
    height: 20px;
    background: linear-gradient(#ababab, #ababab) center / 100% 1px no-repeat;
  }
  input::-webkit-slider-thumb {
    appearance: none;
    width: 5px;
    height: 11px;
    background-color: #777777;
  }
  span {
    margin-left: 9px;
    font-size: 13px;
  }
`;
